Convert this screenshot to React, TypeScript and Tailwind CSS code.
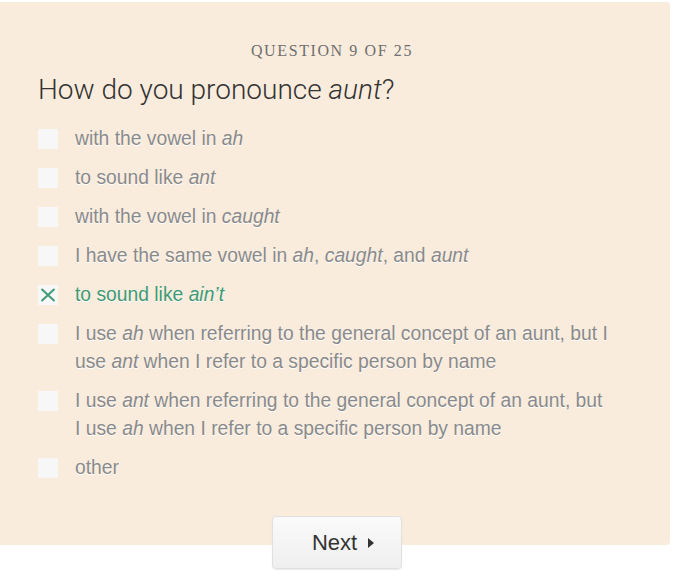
import React, { useState } from 'react';

interface Option {
  id: string;
  label: React.ReactNode;
}

const OPTIONS: Option[] = [
  { id: 'ah', label: <>with the vowel in <i>ah</i></> },
  { id: 'ant', label: <>to sound like <i>ant</i></> },
  { id: 'caught', label: <>with the vowel in <i>caught</i></> },
  { id: 'same', label: <>I have the same vowel in <i>ah</i>, <i>caught</i>, and <i>aunt</i></> },
  { id: 'aint', label: <>to sound like <i>ain’t</i></> },
  {
    id: 'ah-general',
    label: (
      <>
        I use <i>ah</i> when referring to the general concept of an aunt, but I<br />
        use <i>ant</i> when I refer to a specific person by name
      </>
    ),
  },
  {
    id: 'ant-general',
    label: (
      <>
        I use <i>ant</i> when referring to the general concept of an aunt, but<br />
        I use <i>ah</i> when I refer to a specific person by name
      </>
    ),
  },
  { id: 'other', label: <>other</> },
];

const CheckMark = () => (
  <svg width="16" height="14" viewBox="0 0 16 14" className="block">
    <path d="M1.5 1 L14.5 13 M14.5 1 L1.5 13" stroke="#3f9a73" strokeWidth="2" fill="none" />
  </svg>
);

export default function App() {
  const [selected, setSelected] = useState<string[]>(['aint']);

  const toggle = (id: string) => {
    setSelected((prev) => (prev.includes(id) ? prev.filter((x) => x !== id) : [...prev, id]));
  };

  return (
    <div className="w-[674px] h-[576px] bg-white overflow-hidden">
      <section className="mt-[2px] w-[670px] bg-[#f9ecdd] rounded-tr-[4px] rounded-br-[4px] pl-[38px] pr-[38px] pt-[38px] pb-[63px]">
        <p className="pr-[6px] text-center text-[16px] leading-[22px] tracking-[1.6px] text-[#6f6f6f] font-['Liberation_Serif',serif]">
          QUESTION 9 OF 25
        </p>
        <h1 className="mt-[12px] text-[28px] leading-[32px] font-light text-[#333] font-['Roboto',sans-serif]">
          How do you pronounce <i>aunt</i>?
        </h1>

        <ul className="mt-[19px] flex flex-col gap-[11px] font-['Liberation_Sans',Arial,sans-serif] text-[19.3px] leading-[28px]">
          {OPTIONS.map((opt) => {
            const isOn = selected.includes(opt.id);
            return (
              <li key={opt.id}>
                <button
                  type="button"
                  onClick={() => toggle(opt.id)}
                  className="flex items-start gap-[17px] text-left"
                >
                  <span className="mt-[4px] w-[20px] h-[20px] shrink-0 bg-[#f7f7f7] flex items-center justify-center">
                    {isOn && <CheckMark />}
                  </span>
                  <span
                    className={`whitespace-nowrap [text-shadow:0_1px_0_#fff] ${
                      isOn ? 'text-[#3f9a73]' : 'text-[#8a8a8a]'
                    }`}
                  >
                    {opt.label}
                  </span>
                </button>
              </li>
            );
          })}
        </ul>
      </section>

      <div className="flex justify-center -mt-[29px]">
        <button
          type="button"
          className="w-[130px] h-[53px] pl-[12px] rounded-[4px] border border-[#e0e0e0] bg-gradient-to-b from-[#fafafa] to-[#efefef] shadow-[0_1px_1px_rgba(0,0,0,0.08)] flex items-center justify-center gap-[11px] font-['Liberation_Sans',Arial,sans-serif] text-[22px] text-[#333]"
        >
          <span>Next</span>
          <span className="w-0 h-0 border-y-[5.5px] border-y-transparent border-l-[6px] border-l-[#333]" />
        </button>
      </div>
    </div>
  );
}
